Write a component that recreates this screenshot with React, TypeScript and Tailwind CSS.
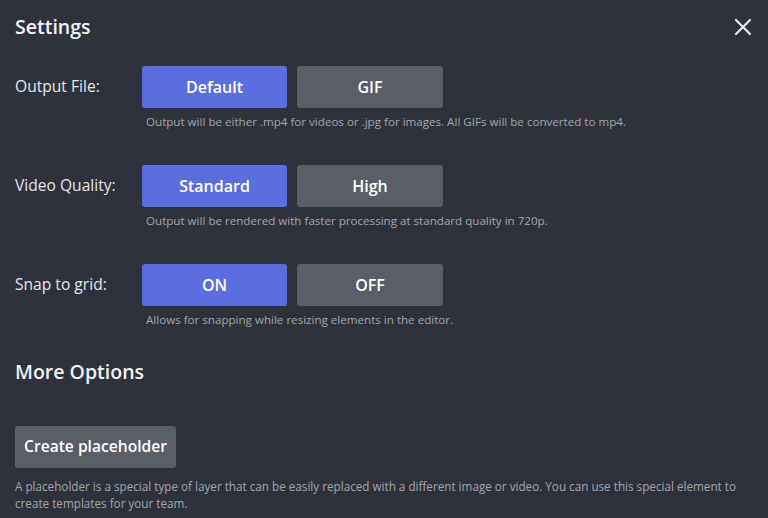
import React from "react";

function Toggle({ a, b, note }: { a: string; b: string; note: string }) {
  return (
    <div>
      <div className="flex gap-[10px]">
        <button className="w-[145px] h-[42px] rounded-[3px] bg-[#5b6ee0] text-white text-[16px] font-semibold">{a}</button>
        <button className="w-[146px] h-[42px] rounded-[3px] bg-[#5b5d68] text-white text-[16px] font-semibold">{b}</button>
      </div>
      <p className="mt-[6px] pl-[4px] text-[11.6px] leading-[16px] text-[#a3a6ae]">{note}</p>
    </div>
  );
}

function Row({ label, a, b, note }: { label: string; a: string; b: string; note: string }) {
  return (
    <div className="flex">
      <div className="w-[127px] text-[15.6px] leading-[40px] text-[#e4e5e8]">{label}</div>
      <Toggle a={a} b={b} note={note} />
    </div>
  );
}

export default function App() {
  return (
    <div className="w-[768px] h-[518px] overflow-hidden bg-[#2f323d] px-[15px] font-['Open_Sans',sans-serif] text-white">
      <div className="flex h-[54px] items-center justify-between">
        <h1 className="text-[19.5px] font-semibold leading-[28px] text-[#f2f2f4]">Settings</h1>
        <svg width="18" height="18" viewBox="0 0 18 18" className="mr-[1px]" fill="none" stroke="#e6e7ea" strokeWidth="2.2" strokeLinecap="round">
          <path d="M2 2L16 16M16 2L2 16" />
        </svg>
      </div>
      <div className="mt-[12px] flex flex-col gap-[35px]">
        <Row label="Output File:" a="Default" b="GIF" note="Output will be either .mp4 for videos or .jpg for images. All GIFs will be converted to mp4." />
        <Row label="Video Quality:" a="Standard" b="High" note="Output will be rendered with faster processing at standard quality in 720p." />
        <Row label="Snap to grid:" a="ON" b="OFF" note="Allows for snapping while resizing elements in the editor." />
      </div>
      <h2 className="mt-[30px] text-[19.5px] font-semibold leading-[28px] text-[#f2f2f4]">More Options</h2>
      <button className="mt-[40px] h-[42px] w-[161px] rounded-[3px] bg-[#5b5d68] text-[15.6px] font-semibold text-white">Create placeholder</button>
      <p className="mt-[10px] text-[11.7px] leading-[17px] text-[#a3a6ae]">
        A placeholder is a special type of layer that can be easily replaced with a different image or video. You can use this special element to create templates for your team.
      </p>
    </div>
  );
}
